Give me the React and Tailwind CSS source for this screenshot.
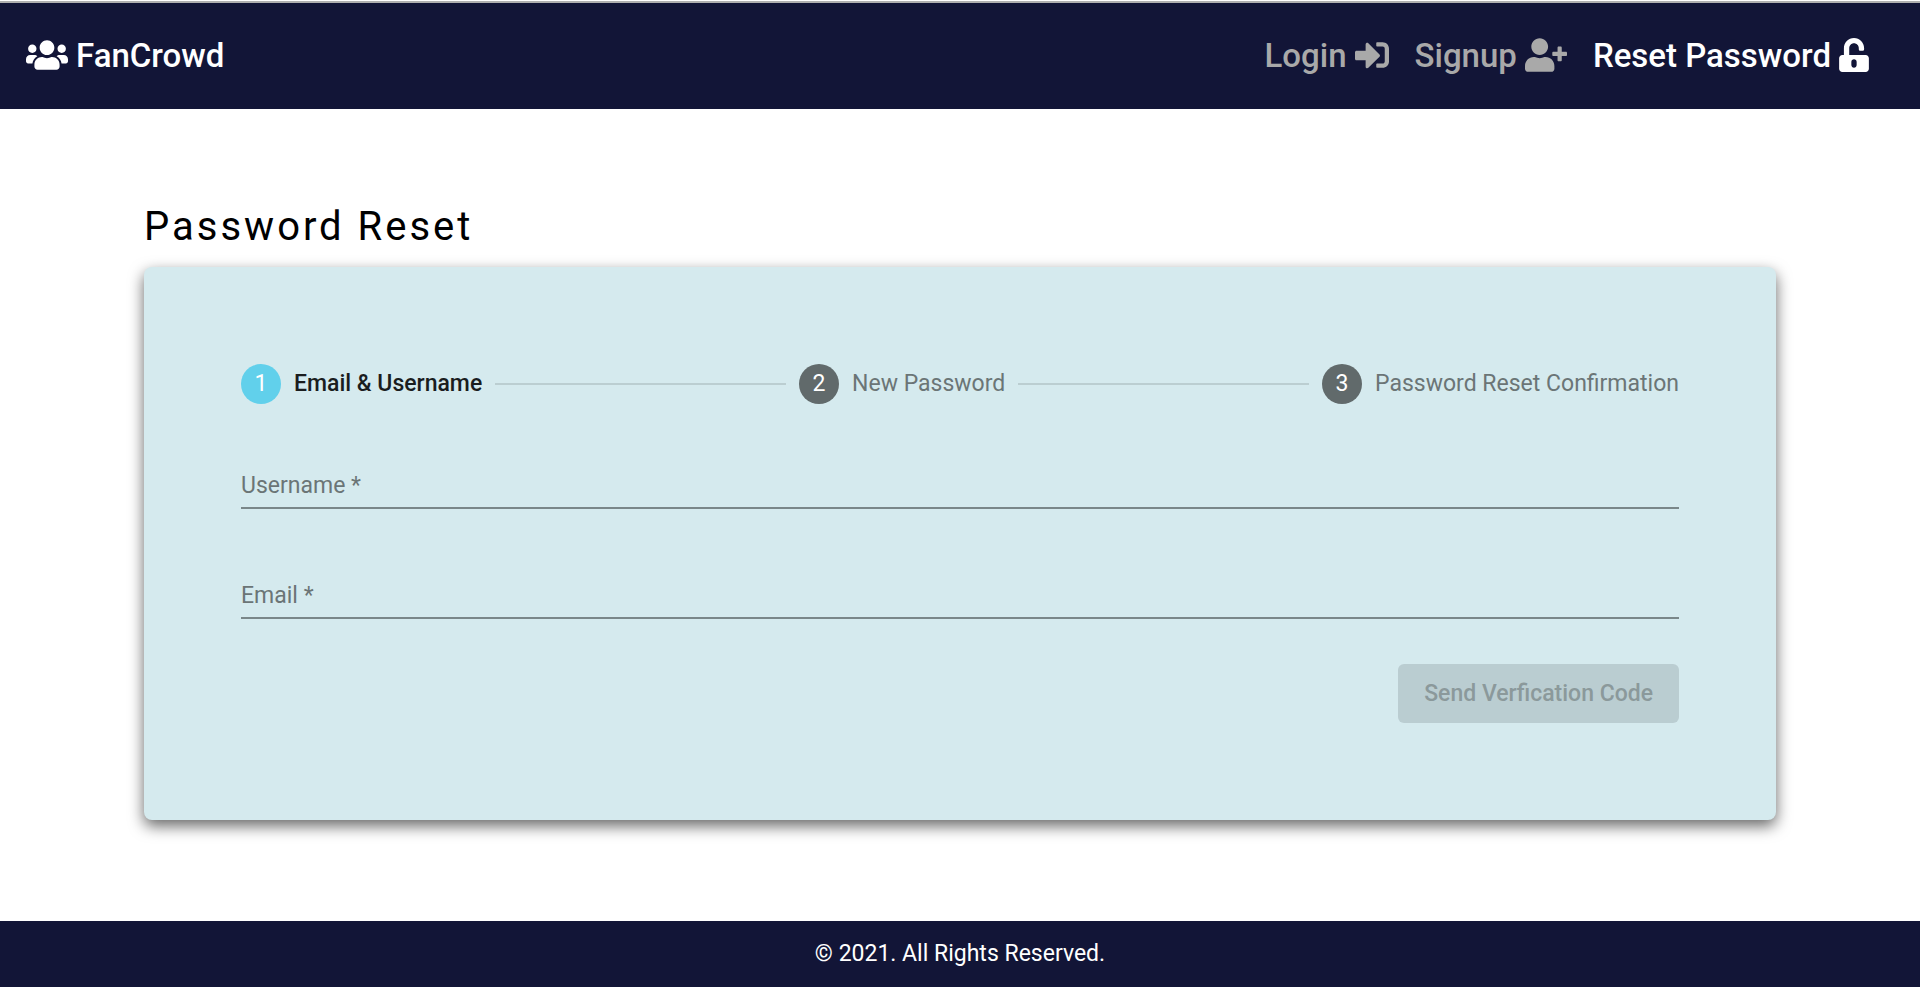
import { FaSignInAlt, FaUnlockAlt, FaUserPlus, FaUsers } from "react-icons/fa";

const steps = ["Email & Username", "New Password", "Password Reset Confirmation"];

function NavLink({ label, icon: Icon, iconWidth, active }) {
  return (
    <a
      href="#"
      aria-current={active ? "page" : undefined}
      className={`flex items-center gap-2 ${active ? "text-white" : "text-[#a9a9a9]"}`}
    >
      {label}
      <Icon className={`mb-0.5 h-[34px] ${iconWidth}`} aria-hidden="true" />
    </a>
  );
}

function Stepper() {
  return (
    <ol className="flex items-center gap-[13px] leading-[34px]">
      {steps.flatMap((step, i) => {
        const item = (
          <li
            key={step}
            aria-current={i === 0 ? "step" : undefined}
            className={`flex items-center gap-[13px] whitespace-nowrap ${
              i === 0 ? "font-medium text-[#1a1d1e]" : "text-[#6b7576]"
            }`}
          >
            <span
              className={`flex size-10 items-center justify-center rounded-full font-normal text-white ${
                i === 0 ? "bg-[#61d0eb]" : "bg-[#616a6b]"
              }`}
            >
              {i + 1}
            </span>
            {step}
          </li>
        );
        return i === 0
          ? [item]
          : [<li key={`line-${i}`} aria-hidden="true" className="h-0.5 flex-1 bg-[#bbced1]" />, item];
      })}
    </ol>
  );
}

function Field({ id, label, type }) {
  return (
    <div className="relative">
      <input
        id={id}
        type={type}
        required
        placeholder=" "
        className="peer block h-[46px] w-full border-b-2 border-[#7a8789] bg-transparent outline-none"
      />
      <label
        htmlFor={id}
        className="pointer-events-none absolute top-[7px] left-0 text-[#6b7576] peer-focus:text-[#1a1d1e] peer-[:not(:placeholder-shown)]:hidden"
      >
        {label} *
      </label>
    </div>
  );
}

export default function App() {
  return (
    <div className="flex min-h-screen flex-col bg-white pt-px font-[Roboto,sans-serif] text-[23px] leading-8 text-black">
      <header className="flex h-[108px] items-center justify-between border-t-2 border-[#b0b0b0] bg-[#121537] pr-[51px] pl-[26px] text-[33px] font-medium">
        <a href="#" className="flex items-center gap-2 text-white">
          <FaUsers className="mb-0.5 h-[34px] w-[42px]" aria-hidden="true" />
          FanCrowd
        </a>
        <nav className="flex items-center gap-[26px]">
          <NavLink label="Login" icon={FaSignInAlt} iconWidth="w-[34px]" />
          <NavLink label="Signup" icon={FaUserPlus} iconWidth="w-[42px]" />
          <NavLink label="Reset Password" icon={FaUnlockAlt} iconWidth="w-[30px]" active />
        </nav>
      </header>

      <main className="mx-auto w-[85%] flex-1 pt-[93px] pb-[100px]">
        <h1 className="mb-[15px] text-[40px] leading-[50px] tracking-[3px]">Password Reset</h1>
        <section className="rounded-lg bg-[#d5eaee] p-[97px] shadow-[0_6px_15px_rgba(0,0,0,0.6)]">
          <Stepper />
          <form className="pt-[59px]">
            <div className="flex flex-col gap-16">
              <Field id="username" label="Username" type="text" />
              <Field id="email" label="Email" type="email" />
            </div>
            <div className="mt-[45px] flex justify-end">
              <button
                type="submit"
                disabled
                className="h-[59px] rounded-md bg-[#bacdd1] px-[26px] font-medium text-[#8b999b]"
              >
                Send Verfication Code
              </button>
            </div>
          </form>
        </section>
      </main>

      <footer className="flex h-[66px] items-center justify-center bg-[#121537] text-white">
        © 2021. All Rights Reserved.
      </footer>
    </div>
  );
}
